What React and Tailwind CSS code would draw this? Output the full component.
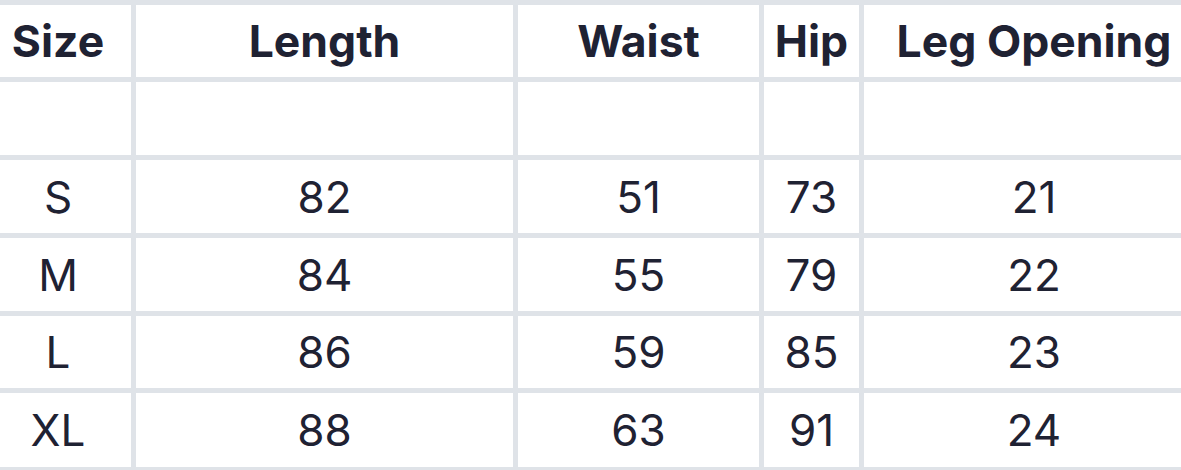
import React from 'react';

const headers = ['Size', 'Length', 'Waist', 'Hip', 'Leg Opening'];

const rows = [
    ['', '', '', '', ''],
    ['S', '82', '51', '73', '21'],
    ['M', '84', '55', '79', '22'],
    ['L', '86', '59', '85', '23'],
    ['XL', '88', '63', '91', '24'],
];

const App = () => {
    return (
        <div className="w-[1181px] h-[470px] overflow-hidden bg-white" style={{ fontFamily: 'Inter, "Noto Sans", sans-serif' }}>
            <div className="-ml-[20px] w-max grid grid-cols-[146px_377px_241px_95px_340px] grid-rows-[72px_73px_73px_73px_72px_74px] gap-[5px] p-[5px] bg-[#dfe3e8] text-[#1f2233]">
                {headers.map((h) => (
                    <div key={h} className="bg-white flex items-center justify-center text-[44.5px] font-bold leading-none whitespace-nowrap">
                        {h}
                    </div>
                ))}
                {rows.map((row, i) =>
                    row.map((cell, j) => (
                        <div key={i + '-' + j} className="bg-white flex items-center justify-center text-[44px] font-normal leading-none">
                            {cell}
                        </div>
                    ))
                )}
            </div>
        </div>
    );
};

export default App;
